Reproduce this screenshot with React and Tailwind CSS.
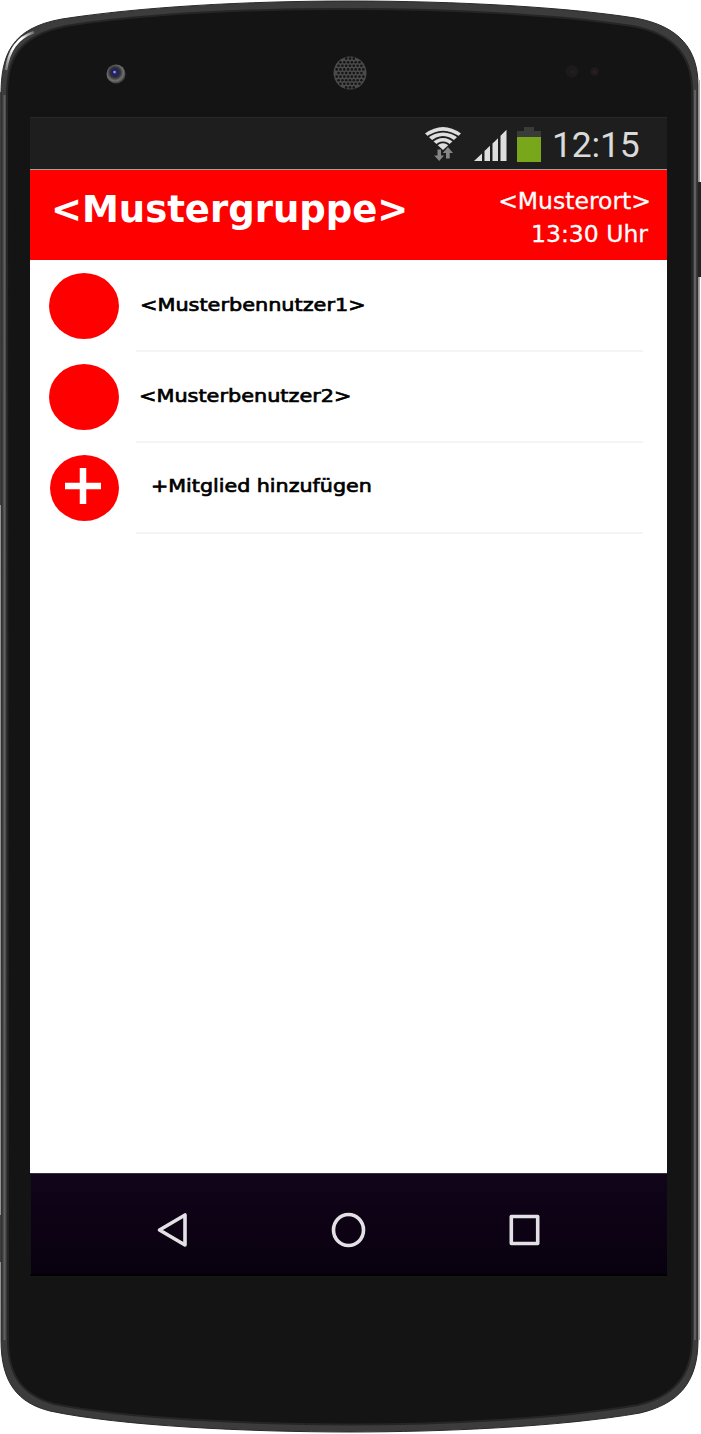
const holes = [];
for (let row = -4; row <= 4; row++) {
  for (let col = -4; col <= 4; col++) {
    const x = col * 3.8 + (row % 2 ? 1.9 : 0);
    const y = row * 3.6;
    if (x * x + y * y < 225) holes.push([350 + x, 73 + y]);
  }
}

const OUTLINE =
  'M1 95 C1 55 11 28 62 19 C140 7 245 1 350 1 C455 1 565 7 635 18 C680 26 698 50 698 85 L698 1340 C698 1383 678 1404 640 1413 C560 1427 440 1432 350 1432 C250 1432 120 1426 50 1411 C18 1403 1 1383 1 1340 Z';
const FACE =
  'M7 95 C7 62 16 36 66 26 C142 14 247 9 350 9 C453 9 563 15 632 26 C676 34 692 58 692 90 L692 1340 C692 1377 672 1397 638 1405 C558 1419 440 1424.500 350 1424.500 C250 1424.500 122 1418 54 1404 C22 1395 8 1375 8 1340 Z';

function DeviceFrame() {
  return (
    <svg className="absolute inset-0" width="701" height="1434" viewBox="0 0 701 1434" fill="none" aria-hidden="true">
      <defs>
        <radialGradient id="lens" cx=".45" cy=".42" r=".55">
          <stop offset="0" stopColor="#3434c4" />
          <stop offset=".28" stopColor="#202052" />
          <stop offset=".5" stopColor="#333" />
          <stop offset=".8" stopColor="#707070" />
          <stop offset="1" stopColor="#444" />
        </radialGradient>
        <linearGradient id="shine" x1="0" y1="1" x2="1" y2="0">
          <stop offset="0" stopColor="#777" />
          <stop offset=".4" stopColor="#fff" />
          <stop offset=".7" stopColor="#fff" />
          <stop offset="1" stopColor="#666" />
        </linearGradient>
      </defs>
      <path d="M0.500 92V505M0.500 1215V1262" stroke="#555" />
      <path d="M699.500 182V277" stroke="#222" strokeWidth="3" />
      <path d="M699.500 80V182M699.500 277V1340" stroke="#aaa" />
      <path d={OUTLINE} fill="#3c3c3d" stroke="#29292a" />
      <path d="M4.500 95V1340M695 90V1340" stroke="#606062" strokeWidth="2" />
      <path d={FACE} fill="#141414" stroke="#252526" strokeWidth="2" />
      <path d="M6 70C9 50 17 38 34 32" stroke="url(#shine)" strokeWidth="2.500" />
      <circle cx="116" cy="74" r="9.500" fill="url(#lens)" />
      <circle cx="114.500" cy="72" r="1.200" fill="#8fa5da" />
      <circle cx="350" cy="73" r="16.500" fill="#4a4a4a" />
      {holes.map(([x, y], i) => (
        <circle key={i} cx={x} cy={y} r="1.300" fill="#151515" />
      ))}
      <circle cx="572" cy="71.500" r="6.500" fill="#1c1b1b" />
      <circle cx="573" cy="72" r="2" fill="#2a1d19" />
      <circle cx="594.500" cy="71.500" r="4.500" fill="#1d1b1b" />
      <circle cx="594.500" cy="72" r="2" fill="#2d1f1a" />
    </svg>
  );
}

function WifiIcon() {
  return (
    <svg className="h-[38px] w-[38px]" viewBox="0 0 38 38" fill="none">
      <path d="M1 8.500Q19 -4.500 37 8.500L19 25Z" fill="#dedede" />
      <g stroke="#1e1e1e" strokeWidth="1.700">
        <path d="M2 13.200Q19 0.200 36 13.200" />
        <path d="M6 18Q19 6 32 18" />
        <path d="M10 22.500Q19 12.300 28 22.500" />
      </g>
      <path d="M13.500 24.500H17V30.500H20L15.200 36L10.200 30.500H13.500Z" fill="#858585" />
      <path d="M22 33.500H25.700V28H29L23.900 22L18.800 28H22Z" fill="#858585" />
    </svg>
  );
}

function SignalIcon() {
  return (
    <svg className="h-8 w-[33px]" viewBox="0 0 33 32" fill="#dedede">
      <path d="M0 32L8 24.500V32ZM10.500 22L16 16.800V32H10.500ZM18.500 14.400L24 9.200V32H18.500ZM26.500 6.800L32.500 .8V32H26.500Z" />
    </svg>
  );
}

function BatteryIcon() {
  return (
    <svg className="h-[35px] w-6" viewBox="0 0 24 35">
      <path d="M7 0H17V4H24V35H0V4H7Z" fill="#393b38" />
      <path d="M0 10H24V35H0Z" fill="#78a71c" />
    </svg>
  );
}

function StatusBar() {
  return (
    <div className="flex h-[53px] border-t border-b border-t-[#292929] border-b-[#a2a299] bg-[#1e1e1e]">
      <div className="ml-[394px] mt-[7px]"><WifiIcon /></div>
      <div className="ml-[12px] mt-[11px]"><SignalIcon /></div>
      <div className="ml-[10px] mt-[9px]"><BatteryIcon /></div>
      <span className="ml-[11px] mt-[7px] font-[Roboto] text-[35.500px] leading-[40px] tracking-[-0.2px] whitespace-nowrap text-[#dadada]">12:15</span>
    </div>
  );
}

function Header() {
  return (
    <header className="flex h-[90px] justify-between bg-[#ff0000] text-white">
      <h1 className="ml-[21px] mt-[18px] text-[37px] leading-[44px] font-bold whitespace-nowrap">&lt;Mustergruppe&gt;</h1>
      <div className="mt-[15px] mr-[16px] text-right text-[23.500px] leading-[33px] whitespace-nowrap [-webkit-text-stroke:0.3px_white]">
        <p>&lt;Musterort&gt;</p>
        <p className="mr-[3px]">13:30 Uhr</p>
      </div>
    </header>
  );
}

function Row({ label, avatarClass, labelClass, children }) {
  return (
    <li className="flex h-[91px]">
      <div className={`mt-[13px] flex h-[66px] shrink-0 rounded-[50%] bg-[#ff0000] ${avatarClass}`}>{children}</div>
      <div className="ml-[17px] flex h-[92px] w-[507px] shrink-0 border-b-2 border-[#f4f4f4]">
        <span className={`h-6 origin-left whitespace-nowrap text-[18.500px] leading-[24px] text-black [-webkit-text-stroke:0.7px_black] ${labelClass}`}>{label}</span>
      </div>
    </li>
  );
}

function NavBar() {
  return (
    <nav className="flex h-[103px] border-t border-b-2 border-l border-t-[#34313c] border-b-black border-l-[#141414] bg-linear-to-b from-[#11051a] to-[#09010f]">
      <svg className="mt-[38px] ml-[126px] size-9" viewBox="0 0 36 36" fill="none" stroke="#e3e1e5" strokeWidth="3.600" strokeLinejoin="round">
        <path d="M2.500 18L28 3V33Z" />
      </svg>
      <svg className="mt-[38px] ml-[138px] size-9" viewBox="0 0 36 36" fill="none" stroke="#e3e1e5" strokeWidth="3.600">
        <ellipse cx="17.500" cy="18" rx="15" ry="15.500" />
      </svg>
      <svg className="mt-[38px] ml-[142px] size-9" viewBox="0 0 36 36" fill="none" stroke="#e3e1e5" strokeWidth="3.600" strokeLinejoin="round">
        <path d="M2.300 4.500H28.700V31.500H2.300Z" />
      </svg>
    </nav>
  );
}

export default function App() {
  return (
    <div className="relative h-[1434px] w-[701px] overflow-hidden bg-white font-['DejaVu_Sans',sans-serif]">
      <DeviceFrame />
      <div className="relative flex h-full flex-col pt-[117px] pl-[30px]">
        <main className="flex h-[1159px] w-[637px] flex-col bg-white">
          <StatusBar />
          <Header />
          <ul className="flex-1">
            <Row label="<Musterbennutzer1>" avatarClass="ml-[19px] w-[70px]" labelClass="ml-[4px] mt-[33px] scale-x-[1.125]" />
            <Row label="<Musterbenutzer2>" avatarClass="ml-[19px] w-[70px]" labelClass="ml-[2.500px] mt-[33px] scale-x-[1.125]" />
            <Row label="+Mitglied hinzufügen" avatarClass="ml-[20px] w-[69px]" labelClass="ml-[15px] mt-[32px] scale-x-[1.115]">
              <svg className="mt-[13px] ml-[14.500px] size-9" viewBox="0 0 36 36" fill="none" stroke="white" strokeWidth="6.500">
                <path d="M0 18H36M18 0V36" />
              </svg>
            </Row>
          </ul>
          <NavBar />
        </main>
      </div>
    </div>
  );
}
